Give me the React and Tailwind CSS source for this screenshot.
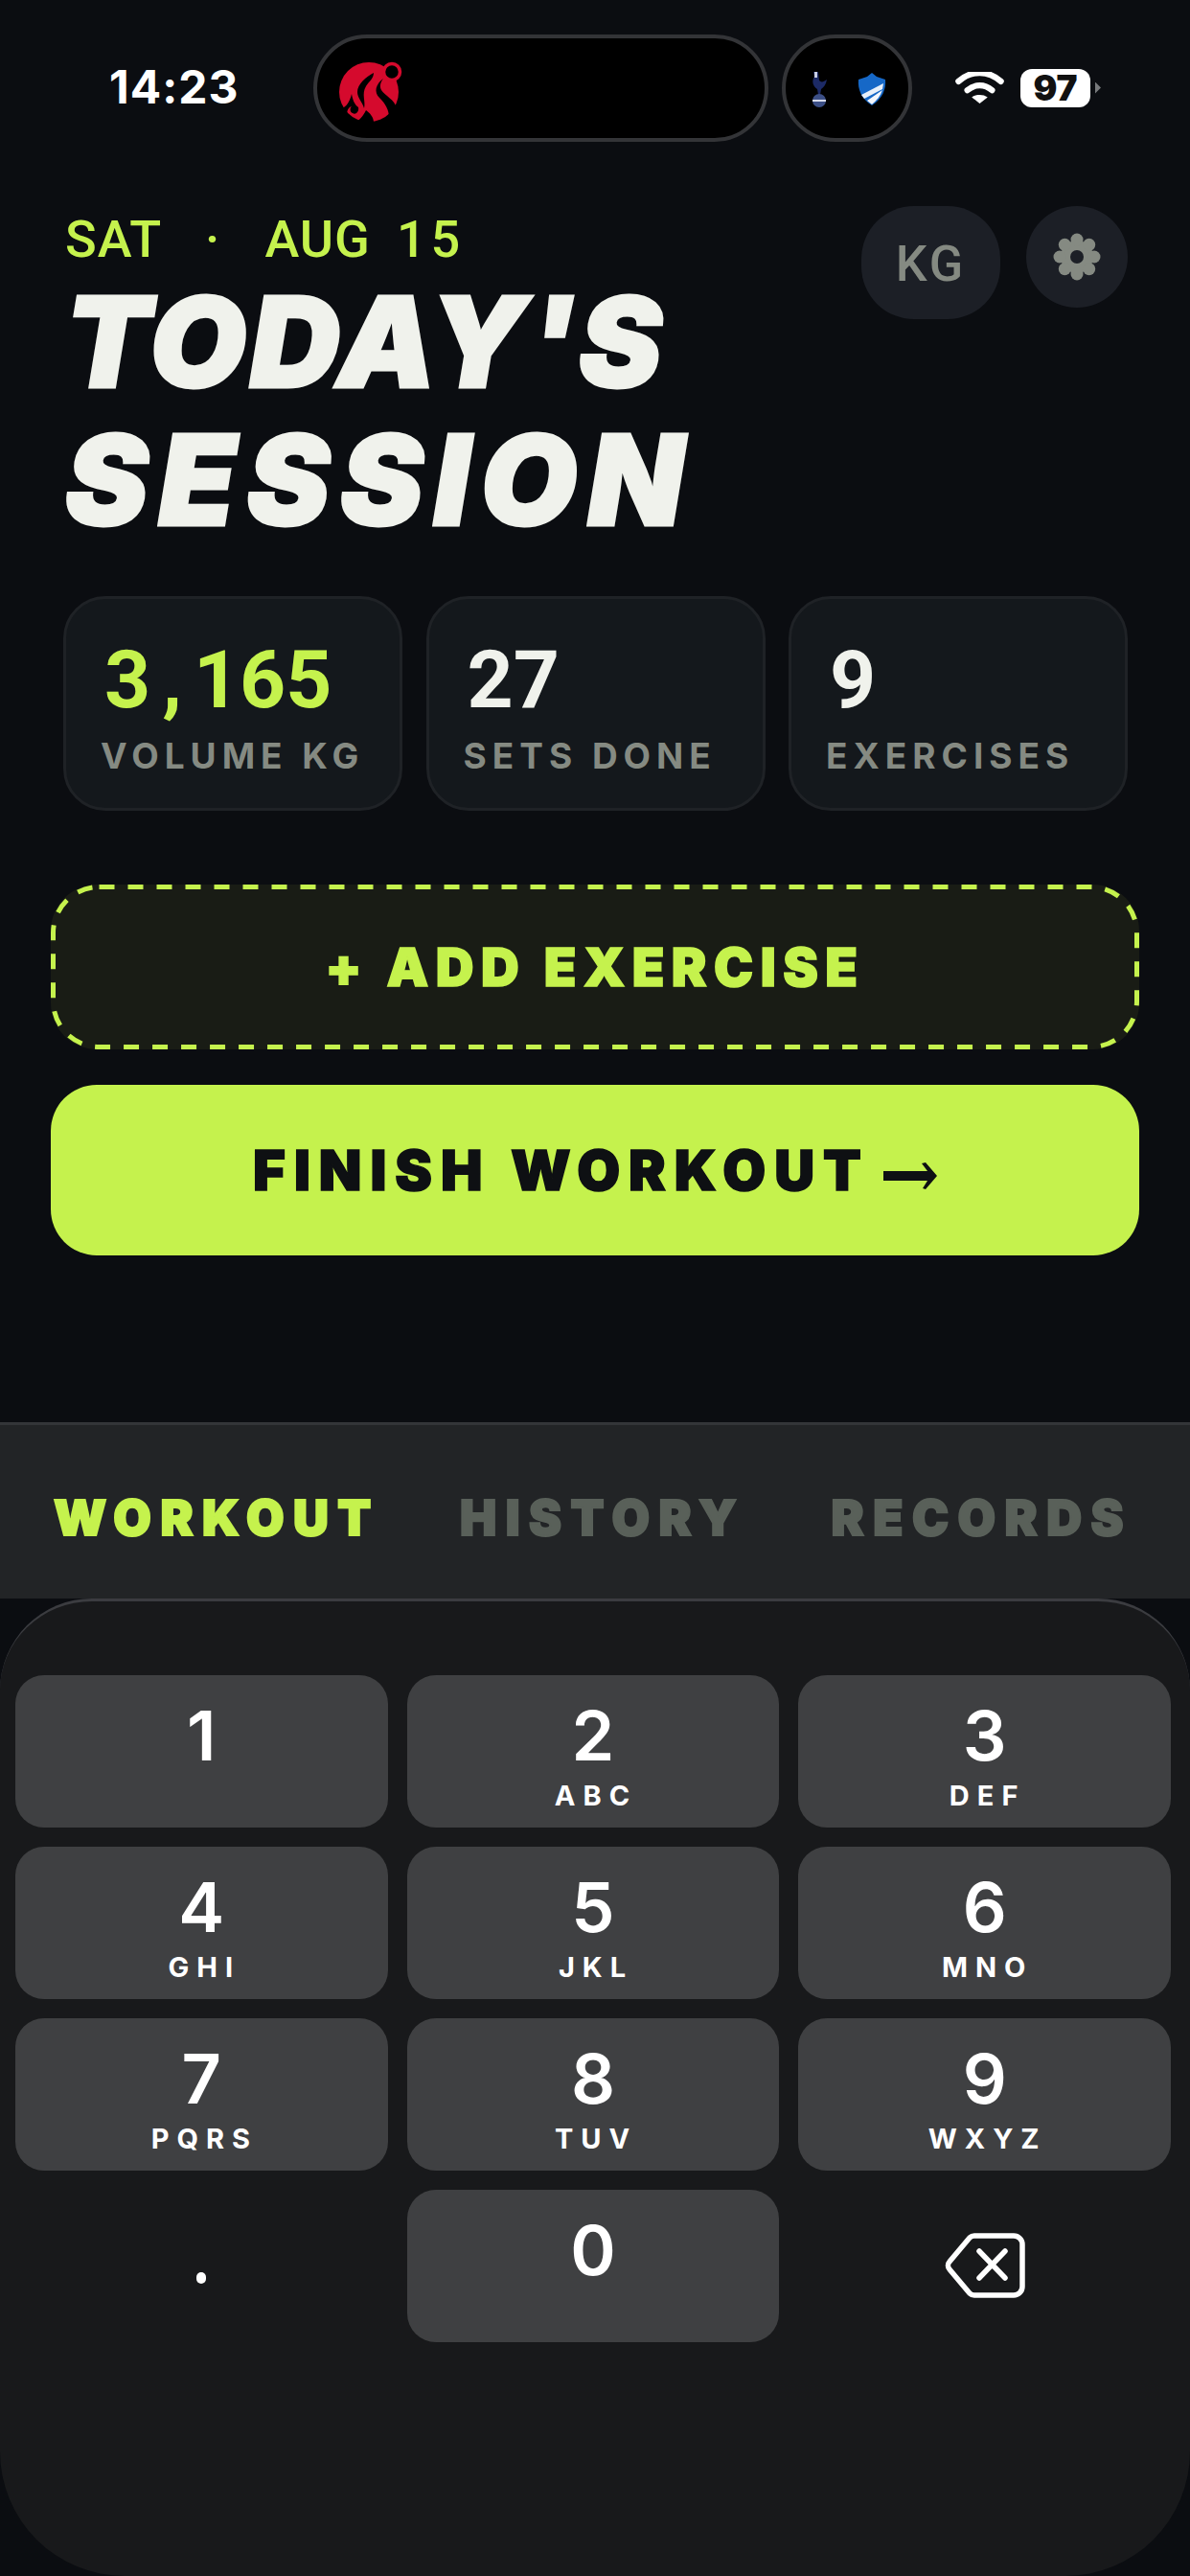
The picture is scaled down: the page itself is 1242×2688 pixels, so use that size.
import React from 'react';

const numeric = "font-['Roboto',sans-serif]";
const wide = "font-['Inter',sans-serif]";

function Logo() {
  return (
    <svg viewBox="0 0 100 80" className="w-[100px] h-[80px]">
      <circle cx="45" cy="44" r="31" fill="#d50a2d" />
      <circle cx="69" cy="23" r="8.5" fill="#000" stroke="#d50a2d" strokeWidth="3.5" />
      <path d="M50 24C42 28 33 36 33 44c0 6 5 10 7 17 2-7-3-15 2-23 3-5 8-8 8-14Z" fill="#000" />
      <path d="M60 30c-8 6-10 14-4 20 6 6 10 12 10 21l8-10c-2-9-12-13-16-19-2-4-1-8 2-12Z" fill="#000" />
      <path d="M13 62c7 0 12-7 14-16 1 6 3 11 7 14 1 5-3 8-6 6-3-1-3-5-1-7-4 1-6 6-4 12H14Z" fill="#000" />
      <path d="M30 76c5-2 9-7 12-13 4 3 8 7 8 13Z" fill="#000" />
    </svg>
  );
}

function Teams() {
  return (
    <svg viewBox="0 0 110 60" className="w-[110px] h-[60px]">
      <path d="M20 13h5l1 9c2 2 4 2 8-1-1 5-3 8-6 10l-1 6h-2l-1-6c-5-3-6-9-3-13Z" fill="#1c2a66" />
      <rect x="21" y="13" width="3" height="6" fill="#c9cfe4" />
      <circle cx="26" cy="43" r="7" fill="#3c4f86" />
      <rect x="19" y="42" width="14" height="2" fill="#d6dbec" />
      <path d="M81 14l5 4 9 3c1 10-3 20-14 27-11-7-15-17-14-27l9-3Z" fill="#1668c7" />
      <path d="M70 37 93 25l-1 6-19 10Z" fill="#e8f0fa" />
      <path d="M76 43 92 32c-2 6-6 11-11 15Z" fill="#f4f7fc" />
    </svg>
  );
}

function Stat({ value, label, lime }) {
  return (
    <div className="w-[354px] h-[224px] rounded-[44px] border-[3px] border-[#1f2226] bg-[#14181c] pl-[40px] pt-[35px]">
      <div className={`${numeric} text-[84px] leading-[100px] font-bold ${lime ? 'text-[#c5f24d]' : 'text-[#f0f2ec]'}`}>{value}</div>
      <div className={`${wide} text-[37px] leading-[40px] font-bold tracking-[6px] text-[#858a82] mt-[9px] -ml-[4px] whitespace-nowrap`}>{label}</div>
    </div>
  );
}

function Key({ n, sub, bare, children }) {
  return (
    <div className={`h-[159px] rounded-[30px] flex flex-col items-center ${bare ? '' : 'bg-[#3f4042]'}`}>
      {children ? children : (
        <>
          <div className={`${wide} text-[72px] leading-[72px] font-semibold text-white mt-[27px]`}>{n}</div>
          <div className={`${wide} text-[29px] leading-[30px] font-bold tracking-[8px] pl-[6px] text-white mt-[12px]`}>{sub}</div>
        </>
      )}
    </div>
  );
}

const keys = [
  ['1', ''], ['2', 'ABC'], ['3', 'DEF'],
  ['4', 'GHI'], ['5', 'JKL'], ['6', 'MNO'],
  ['7', 'PQRS'], ['8', 'TUV'], ['9', 'WXYZ'],
];

export default function App() {
  return (
    <div className={`${wide} w-[1242px] h-[2688px] bg-[#0b0d11] flex flex-col overflow-hidden`}>
      <div className="h-[183px] flex items-center">
        <div className="w-[327px] pl-[114px] text-[48px] font-bold text-white tracking-[1px] -mt-[2px]">14:23</div>
        <div className="w-[475px] h-[112px] rounded-[56px] bg-black border-[4px] border-[#333437] flex items-center pl-[9px]">
          <Logo />
        </div>
        <div className="w-[136px] h-[112px] ml-[14px] rounded-[56px] bg-black border-[4px] border-[#333437] flex items-center justify-center">
          <Teams />
        </div>
        <div className="flex items-center ml-[45px]">
          <svg viewBox="0 0 154 100" className="w-[51px] h-[33px]">
            <path d="M10 30C50-6 104-6 144 30" fill="none" stroke="#fff" strokeWidth="19" strokeLinecap="round" />
            <path d="M38 58c24-20 54-20 78 0" fill="none" stroke="#fff" strokeWidth="19" strokeLinecap="round" />
            <path d="M52 80c14-10 36-10 50 0L77 100Z" fill="#fff" />
          </svg>
          <div className="w-[73px] h-[40px] ml-[17px] rounded-[12px] bg-white flex items-center justify-center text-[37px] leading-[40px] font-black text-[#111]">97</div>
          <div className="w-[6px] h-[12px] ml-[5px] bg-[#77797b] [clip-path:polygon(0_0,100%_50%,0_100%)]" />
        </div>
      </div>

      <div className="relative px-[66px] h-[439px]">
        <div className="absolute right-[65px] top-[32px] flex items-start gap-[27px]">
          <div className={`${numeric} w-[145px] h-[118px] pt-[4px] rounded-[55px] bg-[#1c1f26] flex items-center justify-center text-[52px] font-medium tracking-[3px] text-[#858a82]`}>KG</div>
          <div className="w-[106px] h-[106px] rounded-full bg-[#1c1f26] flex items-center justify-center">
            <svg viewBox="0 0 50 50" className="w-[50px] h-[50px]" fill="#858a82">
              <circle cx="25" cy="25" r="17" />
              <circle cx="25" cy="7" r="6.5" />
              <circle cx="25" cy="43" r="6.5" />
              <circle cx="7" cy="25" r="6.5" />
              <circle cx="43" cy="25" r="6.5" />
              <circle cx="12.3" cy="12.3" r="6.5" />
              <circle cx="37.7" cy="12.3" r="6.5" />
              <circle cx="12.3" cy="37.7" r="6.5" />
              <circle cx="37.7" cy="37.7" r="6.5" />
              <circle cx="25" cy="25" r="7" fill="#1c1f26" />
            </svg>
          </div>
        </div>
        <div className={`${numeric} flex text-[54px] leading-[56px] font-medium text-[#c5f24d] mt-[39px] ml-[2px]`}>
          <span className="tracking-[1px]">SAT</span>
          <span className="ml-[45px]">·</span>
          <span className="ml-[47px] tracking-[1px]">AUG</span>
          <span className="ml-[27px] tracking-[5px]">15</span>
        </div>
        <h1 className={`${wide} text-[130px] leading-[144px] font-black italic text-[#f0f2ec] [-webkit-text-stroke:3px_currentColor] mt-[7px] ml-[2px]`}>
          <span className="tracking-[3.5px]">TODAY'S</span><br /><span className="tracking-[11px]">SESSION</span>
        </h1>
      </div>

      <div className="flex justify-between pl-[66px] pr-[65px] mb-[77px]">
        <Stat value={<>3<span className="mx-[12px]">,</span>165</>} label="VOLUME KG" lime />
        <Stat value="27" label="SETS DONE" />
        <Stat value="9" label="EXERCISES" />
      </div>

      <div className="px-[53px]">
        <div className="relative h-[172px] rounded-[48px] bg-[#191c15] flex items-center justify-center text-[55px] font-black tracking-[7.5px] [-webkit-text-stroke:1.5px_currentColor] text-[#c5f24d]">
          + ADD EXERCISE
          <svg className="absolute inset-0 w-full h-full" fill="none">
            <rect x="2.5" y="2.5" width="1131" height="167" rx="48" stroke="#c5f24d" strokeWidth="5" strokeDasharray="16 14" />
          </svg>
        </div>
        <div className="h-[178px] mt-[37px] rounded-[48px] bg-[#c5f24d] flex items-center justify-center text-[58px] font-black tracking-[9px] [-webkit-text-stroke:1.5px_currentColor] text-[#0e1013]">
          FINISH WORKOUT
          <svg viewBox="0 0 56 28" className="w-[56px] h-[28px] ml-[14px] mt-[12px]">
            <path d="M0 9h46l-6-8 4-1 12 14-12 14-3-1 5-8H0Z" fill="#0e1013" />
          </svg>
        </div>
      </div>

      <div className="h-[184px] mt-[174px] pt-[14px] border-t-[3px] border-[#333538] bg-[#222426] flex items-center justify-between pl-[56px] pr-[60px] text-[51px] font-black tracking-[9.5px] [-webkit-text-stroke:2px_currentColor] text-[#596059]">
        <span className="text-[#c5f24d]">WORKOUT</span>
        <span className="-ml-[6px]">HISTORY</span>
        <span>RECORDS</span>
      </div>

      <div className="flex-1 rounded-t-[96px] rounded-b-[130px] border-t-[3px] border-[#3b3c40] bg-[#18191b] pl-[16px] pr-[20px] pt-[77px]">
        <div className="grid grid-cols-3 gap-x-[20px] gap-y-[20px]">
          {keys.map(([n, sub]) => <Key key={n} n={n} sub={sub} />)}
          <Key bare>
            <div className="w-[10px] h-[12px] rounded-full bg-white mt-[86px]" />
          </Key>
          <Key n="0" />
          <Key bare>
            <svg viewBox="0 0 84 68" className="w-[84px] h-[68px] mt-[45px]" fill="none" stroke="#fff" strokeWidth="5.5" strokeLinejoin="round" strokeLinecap="round">
              <path d="M31 3h41a9 9 0 0 1 9 9v44a9 9 0 0 1-9 9H31a7 7 0 0 1-5-2L5 38a6 6 0 0 1 0-8L26 5a7 7 0 0 1 5-2Z" />
              <path d="M36 19l27 28M63 19 36 47" />
            </svg>
          </Key>
        </div>
      </div>
    </div>
  );
}
